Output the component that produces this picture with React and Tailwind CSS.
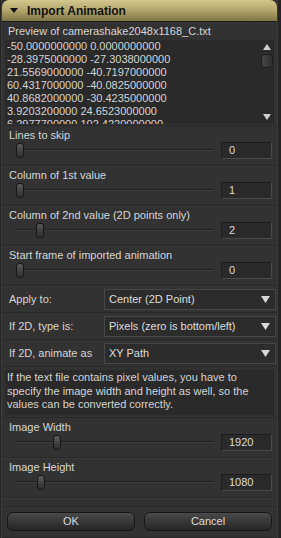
const font = { fontFamily: '"Liberation Sans", Arial, sans-serif' };

const previewLines = [
  "-50.0000000000 0.0000000000",
  "-28.3975000000 -27.3038000000",
  "21.5569000000 -40.7197000000",
  "60.4317000000 -40.0825000000",
  "40.8682000000 -30.4235000000",
  "3.9203200000 24.6523000000",
  "6.2977700000 102.4220000000",
];

function NumBox({ value }) {
  return (
    <div className="w-[51px] h-[17px] bg-[#2a2a2a] border border-t-[#1c1c1c] border-l-[#1c1c1c] border-r-[#4a4a4a] border-b-[#4a4a4a] text-[11px] leading-[15px] text-[#dcdcdc] pl-[7px]">
      {value}
    </div>
  );
}

function SliderRow({ label, value, thumb }) {
  return (
    <div className="h-[40px] border-b border-[#292929] shadow-[0_1px_0_#3a3a3a]">
      <div className="pl-[7px] pt-[2px] h-[15px] text-[11px] leading-[15px] text-[#d6d6d6]">{label}</div>
      <div className="flex items-center h-[19px]">
        <div className="relative ml-[14px] w-[197px] h-[19px]">
          <div className="absolute left-0 right-0 top-[8px] h-[2px] bg-[#1e1e1e] border-b border-[#3e3e3e]" />
          <div
            className="absolute top-[2px] w-[8px] h-[15px] rounded-[3px] border border-[#161616] bg-gradient-to-b from-[#5a5a5a] to-[#2e2e2e]"
            style={{ left: thumb }}
          />
        </div>
        <div className="ml-auto mr-[5px]">
          <NumBox value={value} />
        </div>
      </div>
    </div>
  );
}

function Dropdown({ label, value }) {
  return (
    <div className="flex items-center h-[27px] border-b border-[#292929]">
      <div className="w-[96px] pl-[7px] text-[11px] text-[#d6d6d6] whitespace-nowrap overflow-hidden">{label}</div>
      <div className="ml-[6px] w-[172px] h-[21px] flex items-center bg-[#2c2c2c] border border-[#474747] pl-[4px] pr-[5px]">
        <span className="flex-1 text-[11px] text-[#dedede]">{value}</span>
        <svg width="9" height="7" viewBox="0 0 9 7">
          <path d="M0 0 H9 L4.5 7 Z" fill="#d8d8d8" />
        </svg>
      </div>
    </div>
  );
}

function Button({ children }) {
  return (
    <div className="flex-1 h-[19px] rounded-[6px] border border-[#171717] bg-gradient-to-b from-[#4a4a4a] to-[#262626] flex items-center justify-center text-[11px] text-[#dcdcdc]">
      {children}
    </div>
  );
}

export default function App() {
  return (
    <div className="w-[281px] h-[538px] bg-[#242424] pl-[1px] pr-[3px] flex" style={font}>
      <div className="flex-1 bg-[#323232] border-l border-r border-[#3c3c3c] flex flex-col">
        <div className="h-[22px] rounded-t-[7px] bg-gradient-to-b from-[#d4c88e] via-[#b3a56c] to-[#7e7344] border-b border-[#1e1e1e] flex items-center">
          <svg className="ml-[8px]" width="8" height="5" viewBox="0 0 8 5">
            <path d="M0 0 H8 L4 5 Z" fill="#111" />
          </svg>
          <span className="ml-[9px] text-[12px] font-bold text-[#111]">Import Animation</span>
        </div>

        <div className="h-[18px] pl-[6px] text-[11px] leading-[18px] text-[#d6d6d6]">
          Preview of camerashake2048x1168_C.txt
        </div>
        <div className="mx-[3px] h-[84px] bg-[#2a2a2a] flex overflow-hidden">
          <div className="flex-1 pl-[2px] text-[11px] leading-[13px] text-[#d4d4d4] overflow-hidden">
            {previewLines.map((l) => (
              <div key={l} className="whitespace-nowrap">{l}</div>
            ))}
          </div>
          <div className="w-[14px] flex flex-col items-center pt-[4px] pb-[4px]">
            <svg width="8" height="6" viewBox="0 0 8 6">
              <path d="M4 0 L8 6 H0 Z" fill="#d0d0d0" />
            </svg>
            <div className="mt-[4px] w-[12px] h-[14px] rounded-[4px] bg-gradient-to-r from-[#474747] to-[#2e2e2e] border border-[#1e1e1e]" />
            <div className="flex-1" />
            <svg width="8" height="6" viewBox="0 0 8 6">
              <path d="M0 0 H8 L4 6 Z" fill="#d0d0d0" />
            </svg>
          </div>
        </div>
        <div className="h-[2px] border-b border-[#292929]" />

        <SliderRow label="Lines to skip" value="0" thumb={0} />
        <SliderRow label="Column of 1st value" value="1" thumb={0} />
        <SliderRow label="Column of 2nd value (2D points only)" value="2" thumb={20} />
        <SliderRow label="Start frame of imported animation" value="0" thumb={0} />

        <Dropdown label="Apply to:" value="Center (2D Point)" />
        <Dropdown label="If 2D, type is:" value="Pixels (zero is bottom/left)" />
        <Dropdown label="If 2D, animate as" value="XY Path" />

        <div className="h-[51px] border-b border-[#292929] pt-[3px]">
          <div className="mx-[3px] h-[45px] bg-[#2a2a2a] pl-[2px] pt-[1px] text-[11px] leading-[13.5px] text-[#d4d4d4]">
            If the text file contains pixel values, you have to specify the image width and height as well, so the values can be converted correctly.
          </div>
        </div>

        <SliderRow label="Image Width" value="1920" thumb={37} />
        <SliderRow label="Image Height" value="1080" thumb={21} />

        <div className="flex-1 flex flex-col">
          <div className="h-[9px] border-b border-[#292929]" />
          <div className="flex gap-[9px] px-[5px] pt-[5px]">
            <Button>OK</Button>
            <Button>Cancel</Button>
          </div>
          <div className="flex-1 border-b border-[#262626]" />
        </div>
      </div>
    </div>
  );
}
